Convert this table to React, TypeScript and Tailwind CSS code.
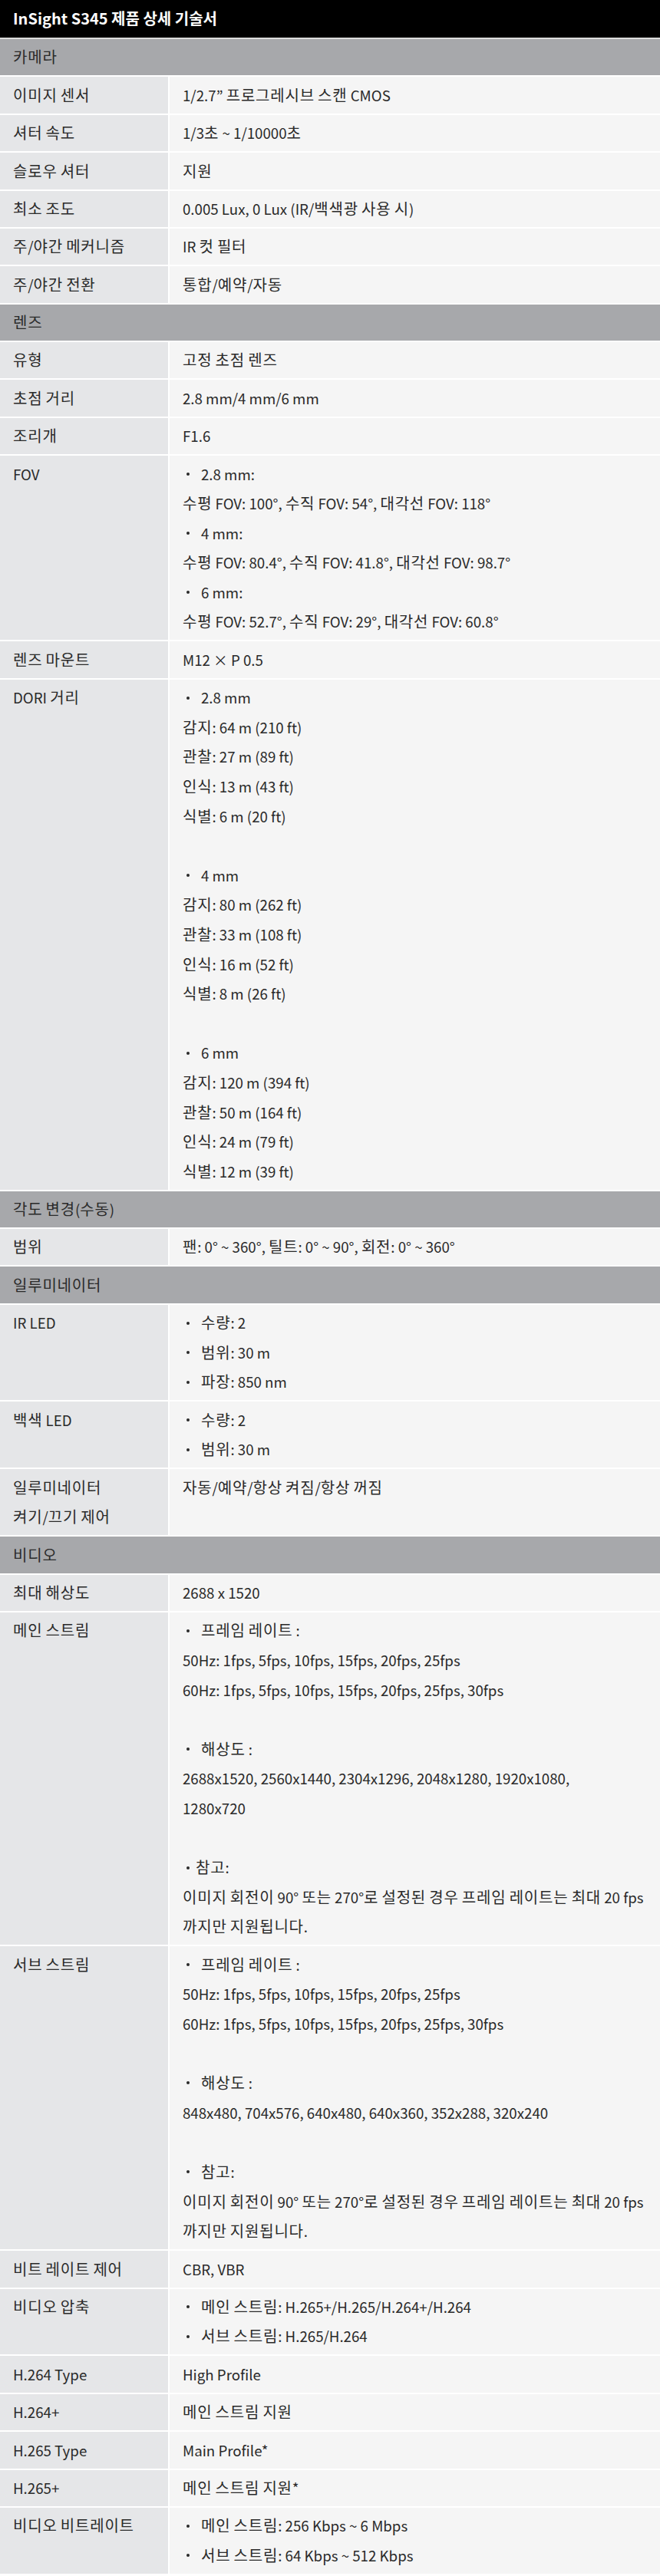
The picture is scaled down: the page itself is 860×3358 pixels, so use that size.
type Line = { text: string; bullet?: boolean; tight?: boolean } | null;

type Row = { label: string[]; lines: Line[] };
type Section = { title: string; rows: Row[] };

const t = (text: string): Line => ({ text });
const b = (text: string): Line => ({ text, bullet: true });

const sections: Section[] = [
  {
    title: "카메라",
    rows: [
      { label: ["이미지 센서"], lines: [t("1/2.7” 프로그레시브 스캔 CMOS")] },
      { label: ["셔터 속도"], lines: [t("1/3초 ~ 1/10000초")] },
      { label: ["슬로우 셔터"], lines: [t("지원")] },
      { label: ["최소 조도"], lines: [t("0.005 Lux, 0 Lux (IR/백색광 사용 시)")] },
      { label: ["주/야간 메커니즘"], lines: [t("IR 컷 필터")] },
      { label: ["주/야간 전환"], lines: [t("통합/예약/자동")] },
    ],
  },
  {
    title: "렌즈",
    rows: [
      { label: ["유형"], lines: [t("고정 초점 렌즈")] },
      { label: ["초점 거리"], lines: [t("2.8 mm/4 mm/6 mm")] },
      { label: ["조리개"], lines: [t("F1.6")] },
      {
        label: ["FOV"],
        lines: [
          b("2.8 mm:"),
          t("수평 FOV: 100°, 수직 FOV: 54°, 대각선 FOV: 118°"),
          b("4 mm:"),
          t("수평 FOV: 80.4°, 수직 FOV: 41.8°, 대각선 FOV: 98.7°"),
          b("6 mm:"),
          t("수평 FOV: 52.7°, 수직 FOV: 29°, 대각선 FOV: 60.8°"),
        ],
      },
      { label: ["렌즈 마운트"], lines: [t("M12 × P 0.5")] },
      {
        label: ["DORI 거리"],
        lines: [
          b("2.8 mm"),
          t("감지: 64 m (210 ft)"),
          t("관찰: 27 m (89 ft)"),
          t("인식: 13 m (43 ft)"),
          t("식별: 6 m (20 ft)"),
          null,
          b("4 mm"),
          t("감지: 80 m (262 ft)"),
          t("관찰: 33 m (108 ft)"),
          t("인식: 16 m (52 ft)"),
          t("식별: 8 m (26 ft)"),
          null,
          b("6 mm"),
          t("감지: 120 m (394 ft)"),
          t("관찰: 50 m (164 ft)"),
          t("인식: 24 m (79 ft)"),
          t("식별: 12 m (39 ft)"),
        ],
      },
    ],
  },
  {
    title: "각도 변경(수동)",
    rows: [{ label: ["범위"], lines: [t("팬: 0° ~ 360°, 틸트: 0° ~ 90°, 회전: 0° ~ 360°")] }],
  },
  {
    title: "일루미네이터",
    rows: [
      { label: ["IR LED"], lines: [b("수량: 2"), b("범위: 30 m"), b("파장: 850 nm")] },
      { label: ["백색 LED"], lines: [b("수량: 2"), b("범위: 30 m")] },
      { label: ["일루미네이터", "켜기/끄기 제어"], lines: [t("자동/예약/항상 켜짐/항상 꺼짐")] },
    ],
  },
  {
    title: "비디오",
    rows: [
      { label: ["최대 해상도"], lines: [t("2688 x 1520")] },
      {
        label: ["메인 스트림"],
        lines: [
          b("프레임 레이트 :"),
          t("50Hz: 1fps, 5fps, 10fps, 15fps, 20fps, 25fps"),
          t("60Hz: 1fps, 5fps, 10fps, 15fps, 20fps, 25fps, 30fps"),
          null,
          b("해상도 :"),
          t("2688x1520, 2560x1440, 2304x1296, 2048x1280, 1920x1080,"),
          t("1280x720"),
          null,
          { text: "참고:", bullet: true, tight: true },
          t("이미지 회전이 90° 또는 270°로 설정된 경우 프레임 레이트는 최대 20 fps"),
          t("까지만 지원됩니다."),
        ],
      },
      {
        label: ["서브 스트림"],
        lines: [
          b("프레임 레이트 :"),
          t("50Hz: 1fps, 5fps, 10fps, 15fps, 20fps, 25fps"),
          t("60Hz: 1fps, 5fps, 10fps, 15fps, 20fps, 25fps, 30fps"),
          null,
          b("해상도 :"),
          t("848x480, 704x576, 640x480, 640x360, 352x288, 320x240"),
          null,
          b("참고:"),
          t("이미지 회전이 90° 또는 270°로 설정된 경우 프레임 레이트는 최대 20 fps"),
          t("까지만 지원됩니다."),
        ],
      },
      { label: ["비트 레이트 제어"], lines: [t("CBR, VBR")] },
      {
        label: ["비디오 압축"],
        lines: [b("메인 스트림: H.265+/H.265/H.264+/H.264"), b("서브 스트림: H.265/H.264")],
      },
      { label: ["H.264 Type"], lines: [t("High Profile")] },
      { label: ["H.264+"], lines: [t("메인 스트림 지원")] },
      { label: ["H.265 Type"], lines: [t("Main Profile*")] },
      { label: ["H.265+"], lines: [t("메인 스트림 지원*")] },
      {
        label: ["비디오 비트레이트"],
        lines: [b("메인 스트림: 256 Kbps ~ 6 Mbps"), b("서브 스트림: 64 Kbps ~ 512 Kbps")],
      },
    ],
  },
];

// hangul runs set a touch wider than the latin around them
const Txt = ({ s }: { s: string }) => (
  <>
    {s.split(/([\uAC00-\uD7A3]+)/).map((part, i) =>
      /[\uAC00-\uD7A3]/.test(part) ? (
        <span key={i} className="text-[20px] tracking-[0.8px]">
          {part}
        </span>
      ) : (
        part
      )
    )}
  </>
);

const ValueLine = ({ line }: { line: Line }) => {
  if (!line) return <div className="h-[38.6px]" />;
  if (!line.bullet)
    return (
      <div className="whitespace-nowrap">
        <Txt s={line.text} />
      </div>
    );
  return (
    <div className="flex items-center whitespace-nowrap">
      <span className={line.tight ? "w-[17px] pl-[5px]" : "w-[24px] pl-[5px]"}>
        <span className="block size-[4px] rounded-full bg-[#2a2a2a]" />
      </span>
      <span>
        <Txt s={line.text} />
      </span>
    </div>
  );
};

const SpecRow = ({ row }: { row: Row }) => (
  <div className="flex border-b-2 border-white">
    <div className="w-[219px] shrink-0 bg-[#e5e6e8] pl-[17px] py-[4.4px]">
      {row.label.map((l) => (
        <div key={l} className="whitespace-nowrap">
          <Txt s={l} />
        </div>
      ))}
    </div>
    <div className="flex-1 border-l-2 border-white bg-[#f5f5f5] pl-[17px] py-[4.4px]">
      {row.lines.map((line, i) => (
        <ValueLine key={i} line={line} />
      ))}
    </div>
  </div>
);

const App = () => {
  return (
    <div className="w-[860px] bg-white text-[18.7px] leading-[38.6px] text-[#2a2a2a] font-['Noto_Sans_CJK_KR','Noto_Sans',sans-serif]">
      <div className="h-[49px] bg-black px-[17px] flex items-center border-b-2 border-[#dcdcdc] box-content">
        <h1 className="text-white text-[20px] font-bold">InSight S345 제품 상세 기술서</h1>
      </div>
      {sections.map((s) => (
        <div key={s.title}>
          <div className="bg-[#a7a8ab] pl-[17px] py-[4.4px] border-b-2 border-white">
            <Txt s={s.title} />
          </div>
          {s.rows.map((r) => (
            <SpecRow key={r.label.join()} row={r} />
          ))}
        </div>
      ))}
    </div>
  );
};

export default App;
